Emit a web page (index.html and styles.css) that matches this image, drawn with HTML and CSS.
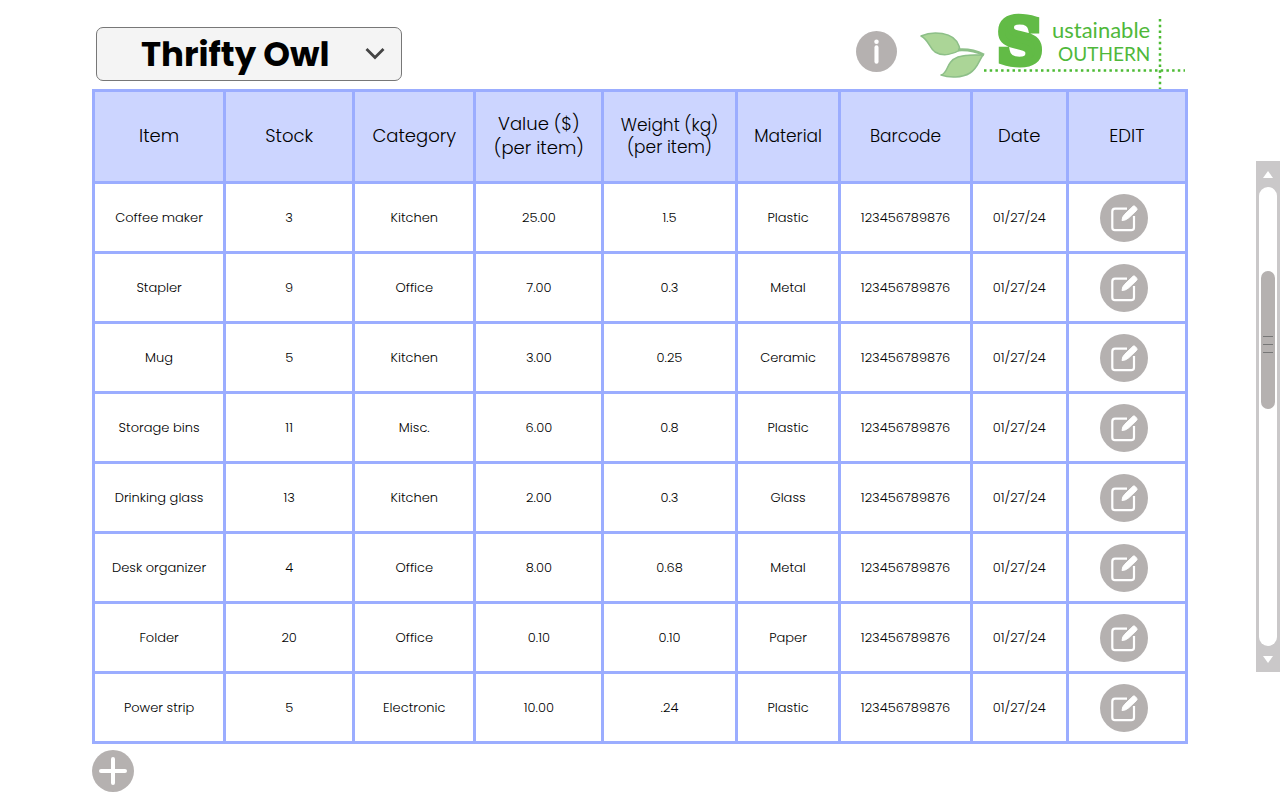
FILE: index.html
```html
<!DOCTYPE html>
<html lang="en">
<head>
<meta charset="utf-8">
<meta name="viewport" content="width=device-width, initial-scale=1">
<title>Thrifty Owl inventory</title>
<link rel="stylesheet" href="styles.css">
</head>
<body>
<svg class="defs" aria-hidden="true">
  <symbol id="edit" viewBox="0 0 48 48">
    <circle cx="24" cy="24" r="24" fill="#b5b1b0"/>
    <path d="M27 14.700H15Q12.300 14.700 12.300 17.400V33.500Q12.300 36.200 15 36.200H31.300Q34 36.200 34 33.500V22" fill="none" stroke="#fff" stroke-width="2.200"/>
    <path d="M22 26.500Q22.300 22.500 24.500 20.500L33 12.300Q34 11.300 35.200 12.500L36.700 14.200Q37.600 15.400 36.500 16.500L28.500 24Q25.500 26.500 22 26.500Z" fill="#fff" stroke="#fff"/>
  </symbol>
</svg>
<div class="page">
  <main class="main">
    <header class="header">
      <div class="picker">
        <select class="picker-select" aria-label="Store"><option>Thrifty Owl</option></select>
        <svg class="picker-arrow" viewBox="0 0 20 14" aria-hidden="true"><path d="M1.500 2L10 10.500L18.500 2" fill="none" stroke="#444" stroke-width="2.800"/></svg>
      </div>
      <div class="brand">
        <button class="round info" type="button" aria-label="Information">
          <svg viewBox="0 0 40 40" aria-hidden="true"><circle cx="20" cy="20" r="20" fill="#b5b1b0"/><circle cx="20" cy="10.500" r="2.200" fill="#fff"/><path d="M20 16V30" stroke="#fff" stroke-width="4" stroke-linecap="round"/></svg>
        </button>
        <svg class="logo" viewBox="0 0 270 76" role="img" aria-label="Sustainable Southern">
          <g fill="#abd597" stroke="#8dbf88" stroke-width="1.500" stroke-linejoin="round">
            <path d="M3 22C14 17 36 17 41 32L42 36C36 40 25 43 17 38C11 34 11 26 3 22Z"/>
            <path d="M23 61C31 59 27 48 40 43C49 40 57 41 65 41C60 48 60 54 52 59C44 64 31 64 23 61Z"/>
            <path d="M40 36Q54 35 66 41" fill="none" stroke-width="3"/>
          </g>
          <text class="logo-initial" x="102" y="49" text-anchor="middle">S</text>
          <text class="logo-text logo-top" x="134" y="24">ustainable</text>
          <text class="logo-text logo-bottom" x="140" y="47">OUTHERN</text>
          <path d="M66 56.500H267M242 5V75" fill="none" stroke="#4dbb35" stroke-width="2.500" stroke-dasharray="2.500 3.200"/>
        </svg>
      </div>
    </header>
    <table class="inventory">
      <colgroup><col class="c-item"><col class="c-stock"><col class="c-category"><col class="c-value"><col class="c-weight"><col class="c-material"><col class="c-barcode"><col class="c-date"><col class="c-edit"></colgroup>
      <thead>
        <tr><th>Item</th><th>Stock</th><th>Category</th><th class="double">Value ($)<br>(per item)</th><th class="double small">Weight (kg)<br>(per item)</th><th class="small">Material</th><th class="small">Barcode</th><th>Date</th><th>EDIT</th></tr>
      </thead>
      <tbody>
        <tr><td>Coffee maker</td><td>3</td><td>Kitchen</td><td>25.00</td><td>1.5</td><td>Plastic</td><td>123456789876</td><td>01/27/24</td><td class="action"><button class="round" type="button" aria-label="Edit Coffee maker"><svg><use href="#edit"/></svg></button></td></tr>
        <tr><td>Stapler</td><td>9</td><td>Office</td><td>7.00</td><td>0.3</td><td>Metal</td><td>123456789876</td><td>01/27/24</td><td class="action"><button class="round" type="button" aria-label="Edit Stapler"><svg><use href="#edit"/></svg></button></td></tr>
        <tr><td>Mug</td><td>5</td><td>Kitchen</td><td>3.00</td><td>0.25</td><td>Ceramic</td><td>123456789876</td><td>01/27/24</td><td class="action"><button class="round" type="button" aria-label="Edit Mug"><svg><use href="#edit"/></svg></button></td></tr>
        <tr><td>Storage bins</td><td>11</td><td>Misc.</td><td>6.00</td><td>0.8</td><td>Plastic</td><td>123456789876</td><td>01/27/24</td><td class="action"><button class="round" type="button" aria-label="Edit Storage bins"><svg><use href="#edit"/></svg></button></td></tr>
        <tr><td>Drinking glass</td><td>13</td><td>Kitchen</td><td>2.00</td><td>0.3</td><td>Glass</td><td>123456789876</td><td>01/27/24</td><td class="action"><button class="round" type="button" aria-label="Edit Drinking glass"><svg><use href="#edit"/></svg></button></td></tr>
        <tr><td>Desk organizer</td><td>4</td><td>Office</td><td>8.00</td><td>0.68</td><td>Metal</td><td>123456789876</td><td>01/27/24</td><td class="action"><button class="round" type="button" aria-label="Edit Desk organizer"><svg><use href="#edit"/></svg></button></td></tr>
        <tr><td>Folder</td><td>20</td><td>Office</td><td>0.10</td><td>0.10</td><td>Paper</td><td>123456789876</td><td>01/27/24</td><td class="action"><button class="round" type="button" aria-label="Edit Folder"><svg><use href="#edit"/></svg></button></td></tr>
        <tr><td>Power strip</td><td>5</td><td>Electronic</td><td>10.00</td><td>.24</td><td>Plastic</td><td>123456789876</td><td>01/27/24</td><td class="action"><button class="round" type="button" aria-label="Edit Power strip"><svg><use href="#edit"/></svg></button></td></tr>
      </tbody>
    </table>
    <button class="round add" type="button" aria-label="Add item">
      <svg viewBox="0 0 42 42" aria-hidden="true"><circle cx="21" cy="21" r="21" fill="#b5b1b0"/><path d="M21 9V33M9 21H33" stroke="#fff" stroke-width="4" stroke-linecap="round"/></svg>
    </button>
  </main>
  <aside class="scroller">
    <button class="scroll-button" type="button" aria-label="Scroll up"><svg viewBox="0 0 10 7" aria-hidden="true"><path d="M5 0L10 7H0Z" fill="#fff"/></svg></button>
    <div class="track"><div class="thumb"><span></span><span></span><span></span></div></div>
    <button class="scroll-button" type="button" aria-label="Scroll down"><svg viewBox="0 0 10 7" aria-hidden="true"><path d="M0 0H10L5 7Z" fill="#fff"/></svg></button>
  </aside>
</div>
</body>
</html>
```
FILE: styles.css
```css
* { box-sizing: border-box; }

body {
  margin: 0;
  background: #fff;
  color: #000;
  font-family: Poppins, Inter, "Liberation Sans", sans-serif;
}

.defs { display: none; }

.page {
  display: flex;
  gap: 68px;
  padding-left: 92px;
}

.main { flex: 1; min-width: 0; }

.header {
  display: flex;
  justify-content: space-between;
  align-items: flex-start;
  height: 89px;
  padding: 14px 0 0 4px;
}

.picker {
  display: grid;
  align-items: center;
  width: 306px;
  margin-top: 13px;
}

.picker-select,
.picker-arrow { grid-area: 1 / 1; }

.picker-select {
  appearance: none;
  width: 100%;
  height: 54px;
  padding: 0 48px 0 44px;
  border: 1px solid #777;
  border-radius: 7px;
  background: #f4f4f4;
  color: #000;
  font: 700 34px Poppins, Inter, "Liberation Sans", sans-serif;
}

.picker-arrow {
  justify-self: end;
  width: 20px;
  height: 14px;
  margin-right: 17px;
  pointer-events: none;
}

.brand { display: flex; gap: 21px; }

.round {
  display: inline-block;
  width: 48px;
  height: 48px;
  padding: 0;
  border: 0;
  border-radius: 50%;
  background: none;
  vertical-align: middle;
  cursor: pointer;
}

.round svg { display: block; width: 100%; height: 100%; }

.info { width: 41px; height: 41px; margin-top: 17px; }

.logo { width: 270px; height: 76px; overflow: visible; }

.logo-initial {
  fill: #62bb46;
  stroke: #62bb46;
  stroke-width: 7px;
  font: 700 62px "DejaVu Serif", serif;
}

.logo-text {
  fill: #4fb83a;
  font-family: Lato, "Open Sans", sans-serif;
}

.logo-top { font-size: 22px; }
.logo-bottom { font-size: 19px; }

.inventory {
  width: 100%;
  table-layout: fixed;
  border-collapse: collapse;
}

.c-item { width: 12%; }
.c-stock { width: 11.8%; }
.c-category { width: 11.1%; }
.c-value { width: 11.7%; }
.c-weight { width: 12.2%; }
.c-material { width: 9.5%; }
.c-barcode { width: 12%; }
.c-date { width: 8.8%; }
.c-edit { width: 10.9%; }

.inventory th,
.inventory td {
  padding: 0;
  border: 3px solid #9badff;
  text-align: center;
  font-weight: 300;
}

.inventory th {
  height: 92px;
  padding-bottom: 2px;
  background: #ccd5ff;
  font-size: 18px;
  line-height: 24px;
}

.inventory th.small { font-size: 17px; line-height: 22px; }
.inventory th.double { padding-bottom: 2px; }

.inventory td {
  height: 70px;
  font-size: 13px;
}

.inventory td.action { padding: 0 6px 0 0; }

.add { width: 42px; height: 42px; margin-top: 6px; }

.scroller {
  display: flex;
  flex-direction: column;
  width: 24px;
  height: 511px;
  margin-top: 161px;
  background: #cac8c9;
}

.scroll-button {
  display: flex;
  justify-content: center;
  align-items: center;
  height: 26px;
  padding: 0;
  border: 0;
  background: none;
}

.scroll-button svg { width: 10px; height: 7px; }

.track {
  flex: 1;
  margin: 0 3px;
  padding: 84px 2px 0;
  border-radius: 9px;
  background: #fff;
}

.thumb {
  display: flex;
  flex-direction: column;
  justify-content: center;
  align-items: center;
  gap: 7px;
  height: 138px;
  padding-top: 8px;
  border-radius: 7px;
  background: #b5b1b0;
}

.thumb span { width: 10px; height: 1px; background: #777; }
```
